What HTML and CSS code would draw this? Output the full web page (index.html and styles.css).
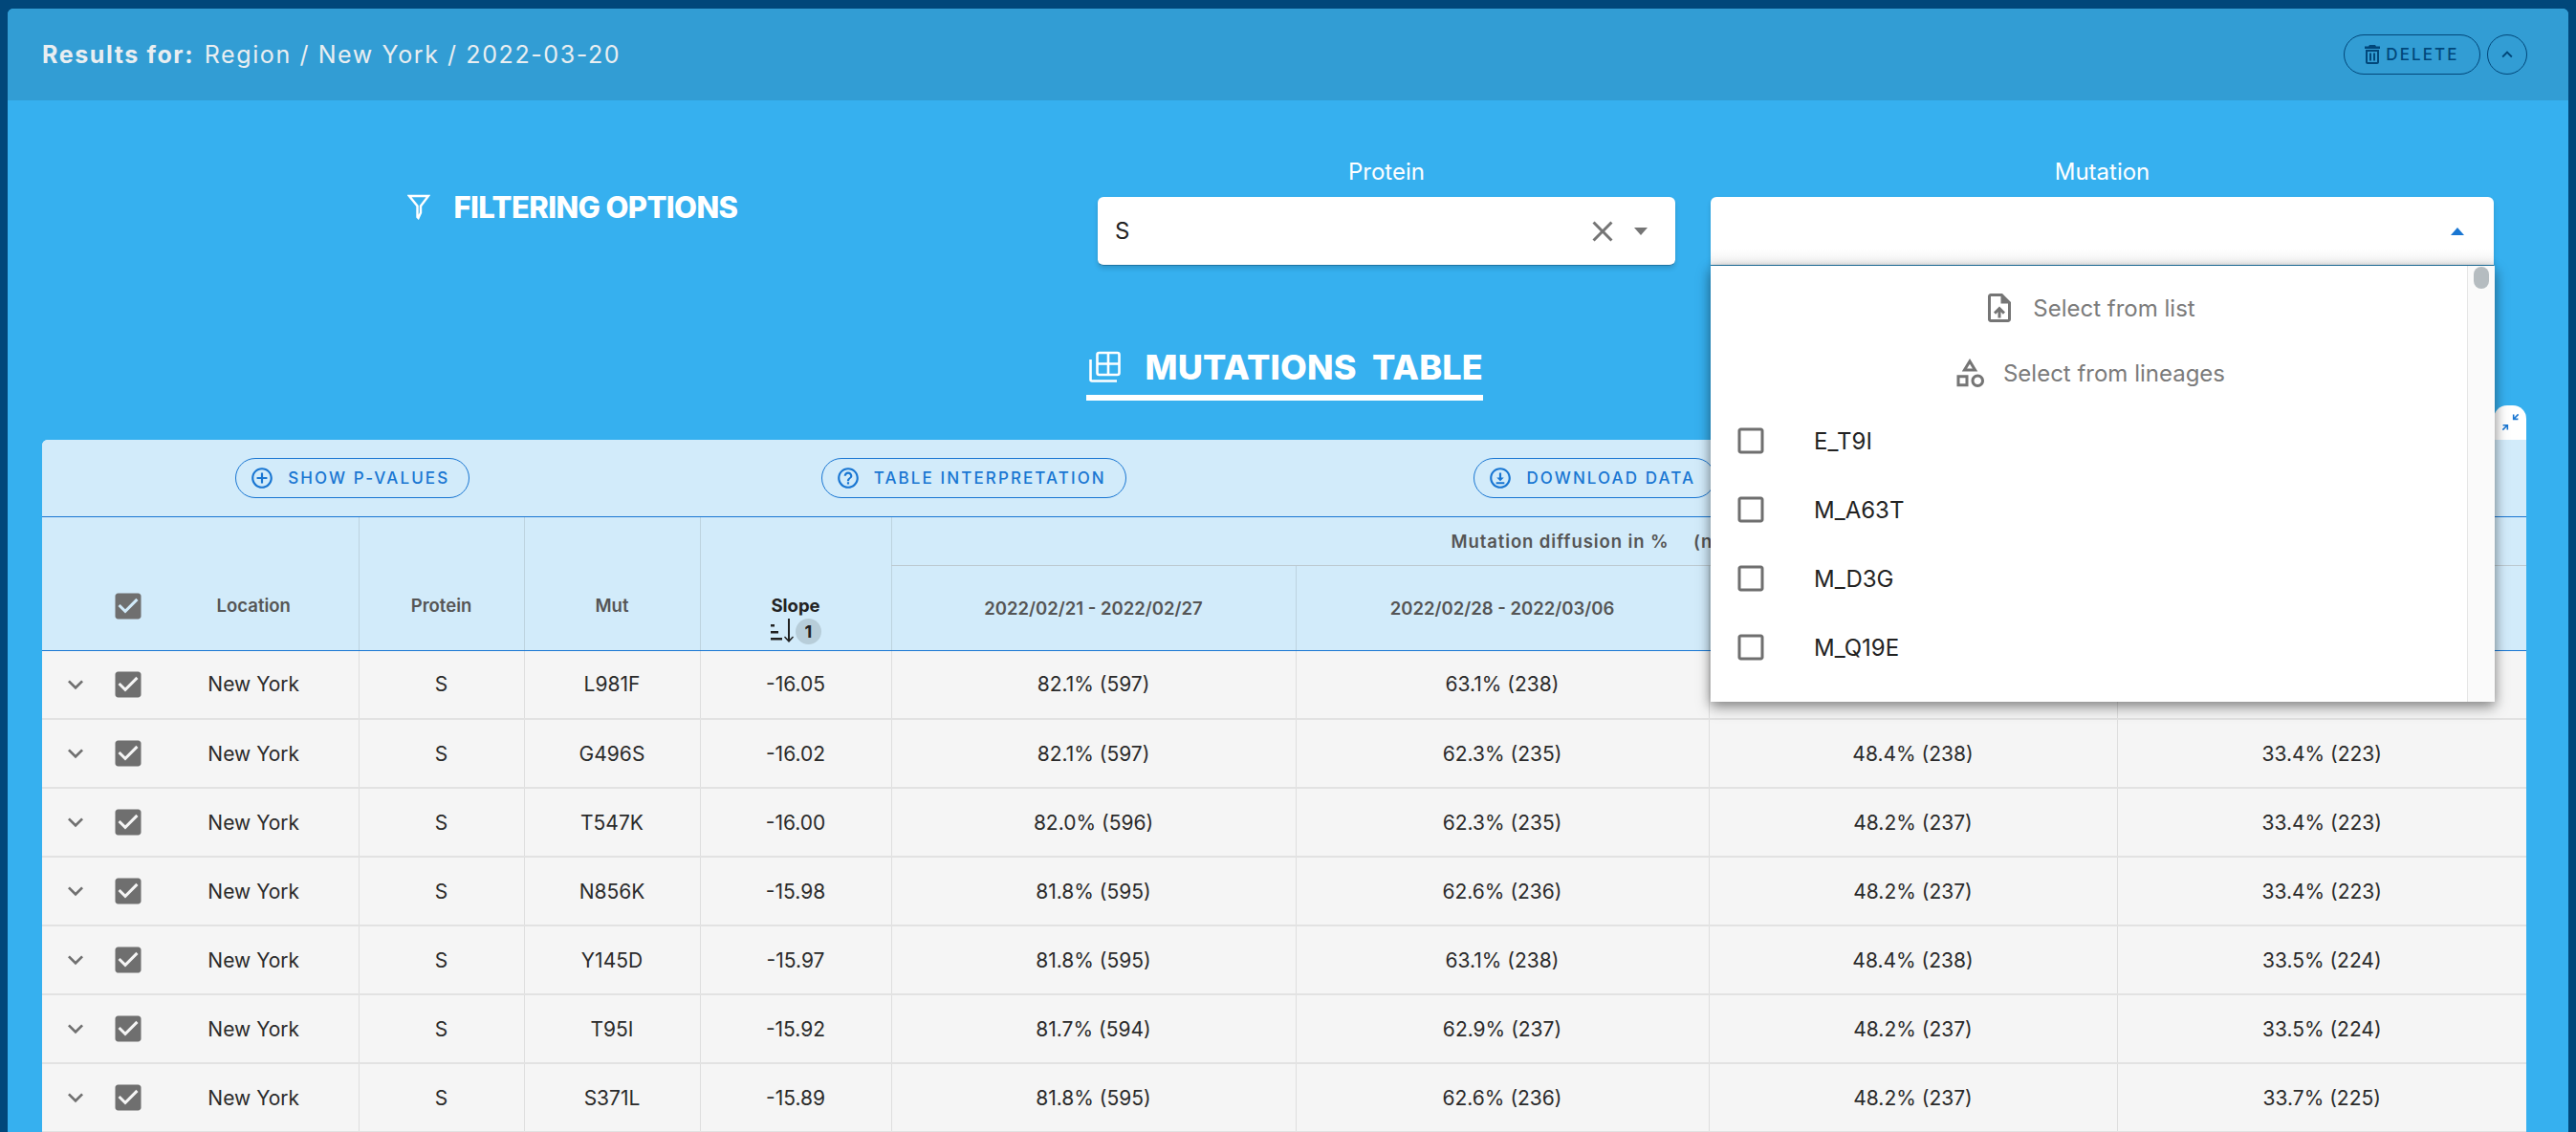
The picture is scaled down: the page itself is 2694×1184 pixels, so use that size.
FILE: index.html
```html
<!DOCTYPE html>
<html lang="en">

<head>
    <meta charset="UTF-8">
    <meta name="viewport" content="width=device-width, initial-scale=1.0">
    <title>Mutations Table</title>
    <link rel="stylesheet" href="styles.css">
</head>

<body>

    <svg class="icon-defs" xmlns="http://www.w3.org/2000/svg">
        <symbol id="i-check" viewBox="0 0 24 24"><path d="M19 3H5c-1.11 0-2 .9-2 2v14c0 1.1.89 2 2 2h14c1.1 0 2-.9 2-2V5c0-1.1-.9-2-2-2zm-9 14l-5-5 1.41-1.41L10 14.17l7.59-7.59L19 8l-9 9z"/></symbol>
        <symbol id="i-box" viewBox="0 0 24 24"><path d="M19 5v14H5V5h14m0-2H5c-1.1 0-2 .9-2 2v14c0 1.1.9 2 2 2h14c1.1 0 2-.9 2-2V5c0-1.1-.9-2-2-2z"/></symbol>
        <symbol id="i-more" viewBox="0 0 24 24"><path d="M16.59 8.59 12 13.17 7.41 8.59 6 10l6 6 6-6z"/></symbol>
    </svg>

    <div class="card">
        <header class="card-head">
            <div class="results"><b>Results for:</b> Region / New York / 2022-03-20</div>
            <div class="head-actions">
                <button type="button" class="pill pill-dark">
                    <svg class="pill-icon" viewBox="0 0 16 20"><path d="M5 0h6l1 1.5h4v2.5H0V1.500h4zM1 5h14v13c0 1.100-.9 2-2 2H3c-1.100 0-2-.9-2-2zm2 2v11h10V7zm2 1.500h2v8H5zm4 0h2v8H9z"/></svg>
                    DELETE
                </button>
                <button type="button" class="round-btn">
                    <svg viewBox="0 0 24 24"><path d="M12 8l-6 6 1.410 1.410L12 10.830l4.590 4.580L18 14z"/></svg>
                </button>
            </div>
        </header>

        <section class="filters">
            <div class="filters-title">
                <svg viewBox="0 0 24 27"><path d="M2 2h20l-8 10.500v7L11.500 25l-1-1V12.500z"/></svg>
                <span>FILTERING OPTIONS</span>
            </div>
            <div class="field field-protein">
                <div class="field-label">Protein</div>
                <div class="select">
                    <span class="select-value">S</span>
                    <svg class="select-clear" viewBox="0 0 24 24"><path d="M19 6.410 17.590 5 12 10.590 6.410 5 5 6.410 10.590 12 5 17.590 6.410 19 12 13.410 17.590 19 19 17.590 13.410 12z"/></svg>
                    <span class="caret"></span>
                </div>
            </div>
            <div class="field field-mutation">
                <div class="field-label">Mutation</div>
                <div class="select select-open">
                    <span class="select-value"></span>
                    <span class="caret caret-up"></span>
                    <div class="menu">
                        <div class="menu-list">
                            <div class="menu-action">
                                <svg viewBox="0 0 24 24"><path d="M14 2H6c-1.100 0-1.990.9-1.990 2L4 20c0 1.100.89 2 1.990 2H18c1.100 0 2-.9 2-2V8l-6-6zm4 18H6V4h7v5h5v11zM8 15.010l1.410 1.410L11 14.840V19h2v-4.160l1.590 1.590L16 15.010 12.010 11 8 15.010z"/></svg>
                                Select from list
                            </div>
                            <div class="menu-action">
                                <svg viewBox="0 0 24 24"><path d="M12 2l-5.500 9h11L12 2zm0 3.840L13.930 9h-3.870L12 5.840zM17.500 13c-2.490 0-4.500 2.010-4.500 4.500s2.010 4.500 4.500 4.500 4.500-2.010 4.500-4.500-2.010-4.500-4.500-4.500zm0 7c-1.380 0-2.500-1.120-2.500-2.500s1.120-2.500 2.500-2.500 2.500 1.120 2.500 2.500-1.120 2.500-2.500 2.500zM3 21.500h8v-8H3v8zm2-6h4v4H5v-4z"/></svg>
                                Select from lineages
                            </div>
                            <div class="menu-option"><svg class="box"><use href="#i-box"/></svg>E_T9I</div>
                            <div class="menu-option"><svg class="box"><use href="#i-box"/></svg>M_A63T</div>
                            <div class="menu-option"><svg class="box"><use href="#i-box"/></svg>M_D3G</div>
                            <div class="menu-option"><svg class="box"><use href="#i-box"/></svg>M_Q19E</div>
                        </div>
                        <div class="menu-track"><div class="menu-thumb"></div></div>
                    </div>
                </div>
            </div>
        </section>

        <div class="table-title-row">
            <h2 class="table-title">
                <svg viewBox="0 0 34 34" fill="none" stroke="#fff" stroke-width="2.600"><rect x="9.500" y="2" width="23" height="23" rx="2"/><path d="M21 2v23M9.500 13.500h23"/><path d="M2.500 9v21c0 1 .6 1.500 1.500 1.500h26"/></svg>
                <span>MUTATIONS&nbsp; TABLE</span>
            </h2>
        </div>

        <div class="table-wrap">
            <div class="expand-tab">
                <svg viewBox="0 0 24 24"><path d="M15 2v7h7V7h-3.600L23 2.400 21.600 1 17 5.600V2zM9 22v-7H2v2h3.600L1 21.600 2.400 23 7 18.400V22z"/></svg>
            </div>
            <div class="toolbar">
                <div class="toolbar-cell">
                    <button type="button" class="pill pill-blue">
                        <svg class="pill-icon" viewBox="0 0 24 24"><path d="M13 7h-2v4H7v2h4v4h2v-4h4v-2h-4V7zm-1-5C6.480 2 2 6.480 2 12s4.480 10 10 10 10-4.480 10-10S17.520 2 12 2zm0 18c-4.410 0-8-3.590-8-8s3.590-8 8-8 8 3.590 8 8-3.590 8-8 8z"/></svg>
                        SHOW P-VALUES
                    </button>
                </div>
                <div class="toolbar-cell">
                    <button type="button" class="pill pill-blue">
                        <svg class="pill-icon" viewBox="0 0 24 24"><path d="M11 18h2v-2h-2v2zm1-16C6.480 2 2 6.480 2 12s4.480 10 10 10 10-4.480 10-10S17.520 2 12 2zm0 18c-4.410 0-8-3.590-8-8s3.590-8 8-8 8 3.590 8 8-3.590 8-8 8zm0-14c-2.210 0-4 1.790-4 4h2c0-1.100.9-2 2-2s2 .9 2 2c0 2-3 1.750-3 5h2c0-2.250 3-2.500 3-5 0-2.210-1.790-4-4-4z"/></svg>
                        TABLE INTERPRETATION
                    </button>
                </div>
                <div class="toolbar-cell">
                    <button type="button" class="pill pill-blue">
                        <svg class="pill-icon" viewBox="0 0 24 24"><path d="M12 2C6.480 2 2 6.480 2 12s4.480 10 10 10 10-4.480 10-10S17.520 2 12 2zm0 18c-4.410 0-8-3.590-8-8s3.590-8 8-8 8 3.590 8 8-3.590 8-8 8zm1-13h-2v4.500H8.500L12 15l3.500-3.500H13V7zM8 16h8v1.800H8z"/></svg>
                        DOWNLOAD DATA
                    </button>
                </div>
                <div class="toolbar-cell"></div>
            </div>

            <table class="mut-table">
                <colgroup>
                    <col class="c-expand"><col class="c-check"><col class="c-loc"><col class="c-prot"><col class="c-mut"><col class="c-slope">
                    <col class="c-w1"><col class="c-w2"><col class="c-w3"><col class="c-w4">
                </colgroup>
                <thead>
                    <tr>
                        <th rowspan="2" class="th-main th-plain"></th>
                        <th rowspan="2" class="th-main th-plain th-check"><svg class="box"><use href="#i-check"/></svg></th>
                        <th rowspan="2" class="th-main th-plain">Location</th>
                        <th rowspan="2" class="th-main">Protein</th>
                        <th rowspan="2" class="th-main">Mut</th>
                        <th rowspan="2" class="th-main th-sorted">
                            Slope
                            <div class="sort-mark">
                                <svg viewBox="0 0 26 28"><path d="M1 7h4v2.500H1zM1 14h8v2.500H1zM1 21h12v2.500H1zM19 1h2v21.500l3-3 1 1-5 5.500-5-5.500 1-1 3 3z"/></svg>
                                <span class="sort-badge">1</span>
                            </div>
                        </th>
                        <th colspan="4" class="th-group">Mutation diffusion in % <span class="th-gap">(n</span></th>
                    </tr>
                    <tr class="tr-weeks">
                        <th>2022/02/21 - 2022/02/27</th>
                        <th>2022/02/28 - 2022/03/06</th>
                        <th></th>
                        <th></th>
                    </tr>
                </thead>
                <tbody>
                    <tr>
                        <td class="td-plain"><svg class="chevron"><use href="#i-more"/></svg></td>
                        <td class="td-plain td-check"><svg class="box"><use href="#i-check"/></svg></td>
                        <td class="td-plain">New York</td><td>S</td><td>L981F</td><td>-16.05</td>
                        <td>82.1% (597)</td><td>63.1% (238)</td><td></td><td></td>
                    </tr>
                    <tr>
                        <td class="td-plain"><svg class="chevron"><use href="#i-more"/></svg></td>
                        <td class="td-plain td-check"><svg class="box"><use href="#i-check"/></svg></td>
                        <td class="td-plain">New York</td><td>S</td><td>G496S</td><td>-16.02</td>
                        <td>82.1% (597)</td><td>62.3% (235)</td><td>48.4% (238)</td><td>33.4% (223)</td>
                    </tr>
                    <tr>
                        <td class="td-plain"><svg class="chevron"><use href="#i-more"/></svg></td>
                        <td class="td-plain td-check"><svg class="box"><use href="#i-check"/></svg></td>
                        <td class="td-plain">New York</td><td>S</td><td>T547K</td><td>-16.00</td>
                        <td>82.0% (596)</td><td>62.3% (235)</td><td>48.2% (237)</td><td>33.4% (223)</td>
                    </tr>
                    <tr>
                        <td class="td-plain"><svg class="chevron"><use href="#i-more"/></svg></td>
                        <td class="td-plain td-check"><svg class="box"><use href="#i-check"/></svg></td>
                        <td class="td-plain">New York</td><td>S</td><td>N856K</td><td>-15.98</td>
                        <td>81.8% (595)</td><td>62.6% (236)</td><td>48.2% (237)</td><td>33.4% (223)</td>
                    </tr>
                    <tr>
                        <td class="td-plain"><svg class="chevron"><use href="#i-more"/></svg></td>
                        <td class="td-plain td-check"><svg class="box"><use href="#i-check"/></svg></td>
                        <td class="td-plain">New York</td><td>S</td><td>Y145D</td><td>-15.97</td>
                        <td>81.8% (595)</td><td>63.1% (238)</td><td>48.4% (238)</td><td>33.5% (224)</td>
                    </tr>
                    <tr>
                        <td class="td-plain"><svg class="chevron"><use href="#i-more"/></svg></td>
                        <td class="td-plain td-check"><svg class="box"><use href="#i-check"/></svg></td>
                        <td class="td-plain">New York</td><td>S</td><td>T95I</td><td>-15.92</td>
                        <td>81.7% (594)</td><td>62.9% (237)</td><td>48.2% (237)</td><td>33.5% (224)</td>
                    </tr>
                    <tr>
                        <td class="td-plain"><svg class="chevron"><use href="#i-more"/></svg></td>
                        <td class="td-plain td-check"><svg class="box"><use href="#i-check"/></svg></td>
                        <td class="td-plain">New York</td><td>S</td><td>S371L</td><td>-15.89</td>
                        <td>81.8% (595)</td><td>62.6% (236)</td><td>48.2% (237)</td><td>33.7% (225)</td>
                    </tr>
                </tbody>
            </table>
        </div>
    </div>

</body>

</html>
```

FILE: styles.css
```css
html,
body {
    height: 100%;
}

body {
    font-family: 'Inter', 'Liberation Sans', sans-serif;
    background-color: #01477a;
    margin: 0;
    padding: 9px 8px 0;
    box-sizing: border-box;
    overflow: hidden;
}

button {
    font-family: inherit;
    cursor: pointer;
}

.icon-defs {
    display: none;
}

.card {
    background-color: #36b0ef;
    border-radius: 6px 6px 0 0;
    height: 1400px;
}

.card-head {
    height: 96px;
    box-sizing: border-box;
    background-color: #329dd4;
    border-radius: 6px 6px 0 0;
    padding: 0 43px 0 36px;
    display: flex;
    justify-content: space-between;
    align-items: center;
}

.results {
    color: #e9eef1;
    font-size: 25px;
    letter-spacing: 1.6px;
}

.results b {
    font-weight: 700;
    margin-right: 2px;
}

.head-actions {
    display: flex;
    gap: 7px;
    margin-top: -1px;
}

.pill {
    display: inline-flex;
    align-items: center;
    justify-content: center;
    height: 42px;
    box-sizing: border-box;
    background: transparent;
    border-radius: 21px;
    font-size: 17px;
    font-weight: 500;
    letter-spacing: 2.1px;
    padding: 0;
}

.pill-dark {
    width: 143px;
    border: 1px solid #01477a;
    color: #01477a;
    gap: 6px;
}

.pill-dark .pill-icon {
    width: 16px;
    height: 20px;
    fill: #01477a;
}

.round-btn {
    width: 42px;
    height: 42px;
    box-sizing: border-box;
    padding: 9px;
    background: transparent;
    border: 1px solid #01477a;
    border-radius: 50%;
}

.round-btn svg {
    display: block;
    width: 22px;
    height: 22px;
    fill: #01477a;
}

.filters {
    display: flex;
    align-items: flex-start;
    padding: 63px 78px 0 36px;
    gap: 37px;
}

.filters-title {
    width: 1067px;
    box-sizing: border-box;
    padding-left: 42px;
    margin-top: 30px;
    display: flex;
    align-items: center;
    justify-content: center;
    gap: 25px;
    color: #fff;
    font-size: 31px;
    font-weight: 800;
    letter-spacing: -0.6px;
}

.filters-title svg {
    width: 24px;
    height: 27px;
    fill: none;
    stroke: #fff;
    stroke-width: 2.4px;
}

.field-protein {
    width: 604px;
}

.field-mutation {
    width: 819px;
}

.field-label {
    color: #fff;
    text-align: center;
    font-size: 24px;
    line-height: 24px;
    margin-bottom: 14px;
}

.select {
    position: relative;
    height: 72px;
    box-sizing: border-box;
    background-color: #fff;
    border-radius: 6px;
    border-bottom: 1px solid #1b75a5;
    box-shadow: 0 3px 5px rgba(0, 0, 0, 0.14);
    display: flex;
    align-items: center;
    padding: 0 17px 0 18px;
    font-size: 24px;
    color: #222;
}

.select-open {
    background: linear-gradient(#fff 76%, #f3f3f3);
    border-radius: 6px 6px 0 0;
}

.select-value {
    flex: 1;
}

.select-clear {
    width: 36px;
    height: 36px;
    fill: #757575;
    margin-right: 15px;
}

.caret {
    width: 0;
    height: 0;
    margin-right: 12px;
    border-left: 7.5px solid transparent;
    border-right: 7.5px solid transparent;
    border-top: 8px solid #757575;
}

.caret-up {
    margin-right: 14px;
    border-top: 0;
    border-bottom: 8px solid #1976d2;
}

.menu {
    position: absolute;
    z-index: 5;
    top: 72px;
    left: 0;
    right: -1px;
    height: 456px;
    background-color: #fff;
    display: flex;
    box-shadow: 0 6px 14px rgba(0, 0, 0, 0.35), 0 2px 10px rgba(0, 0, 0, 0.2);
}

.menu-list {
    flex: 1;
    padding-top: 10px;
}

.menu-action {
    display: flex;
    align-items: center;
    justify-content: center;
    gap: 17px;
    height: 68px;
    color: #7b7b7b;
    font-size: 24px;
}

.menu-action svg {
    width: 36px;
    height: 36px;
    fill: #757575;
}

.menu-action + .menu-action {
    margin-bottom: 1px;
}

.menu-option {
    display: flex;
    align-items: center;
    height: 72px;
    padding-left: 24px;
    gap: 48px;
    color: #222;
    font-size: 24px;
}

.menu-track {
    width: 29px;
    background-color: #fafafa;
    border-left: 1px solid #e5e5e5;
    box-sizing: border-box;
    padding: 1px 6px 0 6px;
}

.menu-thumb {
    height: 23px;
    background-color: #b5bcc0;
    border-radius: 8px;
}

.box {
    width: 36px;
    height: 36px;
    fill: #6f6f6f;
    display: block;
}

.table-title-row {
    display: flex;
    justify-content: center;
    margin: 0 8px 0 0;
    padding-top: 85px;
}

.table-title {
    margin: 0;
    width: 415px;
    display: flex;
    align-items: center;
    gap: 26px;
    box-sizing: border-box;
    padding: 0 0 8px 2px;
    border-bottom: 6px solid #fff;
    color: #fff;
    font-size: 36px;
    font-weight: 800;
    letter-spacing: 0.2px;
    line-height: 42px;
    white-space: nowrap;
}

.table-title svg {
    width: 34px;
    height: 34px;
    flex: none;
}

.table-wrap {
    position: relative;
    margin: 41px 44px 0 36px;
    background-color: #f5f5f5;
    border-radius: 6px 0 0 0;
}

.expand-tab {
    position: absolute;
    top: -36px;
    right: 0;
    width: 34px;
    height: 36px;
    background-color: #fff;
    border-radius: 14px 14px 0 0;
    display: flex;
    justify-content: center;
    padding-top: 8px;
    box-sizing: border-box;
}

.expand-tab svg {
    width: 19px;
    height: 19px;
    fill: #1976d2;
}

.toolbar {
    height: 81px;
    box-sizing: border-box;
    background-color: #d2ebfa;
    border-radius: 6px 0 0 0;
    border-bottom: 1px solid #1976d2;
    display: grid;
    grid-template-columns: repeat(4, 1fr);
    align-items: center;
    justify-items: center;
}

.pill-blue {
    border: 1px solid #1976d2;
    color: #1976d2;
    gap: 14px;
    padding: 0 20px 0 14px;
}

.pill-blue .pill-icon {
    width: 26px;
    height: 26px;
    fill: #1976d2;
}

.mut-table {
    width: 2598px;
    table-layout: fixed;
    border-collapse: collapse;
    font-size: 21px;
    color: #2a2a2a;
}

.c-expand { width: 68px; }
.c-check { width: 44px; }
.c-loc { width: 219px; }
.c-prot { width: 173px; }
.c-mut { width: 184px; }
.c-slope { width: 200px; }
.c-w1 { width: 423px; }
.c-w2 { width: 432px; }
.c-w3 { width: 427px; }
.c-w4 { width: 428px; }

.mut-table th {
    background-color: #d2ebfa;
    color: #555;
    font-size: 18.5px;
    font-weight: 600;
    padding: 0;
    border-left: 1px solid #bdd3df;
    border-bottom: 1px solid #1976d2;
}

.mut-table .th-main {
    height: 139px;
    vertical-align: top;
    padding-top: 80px;
    line-height: 24px;
    box-sizing: border-box;
}

.mut-table .th-plain {
    border-left: 0;
}

.mut-table .th-check {
    padding-top: 75px;
}

.th-check .box {
    margin-left: 4px;
}

.mut-table .th-sorted {
    color: #222;
    font-weight: 700;
}

.sort-mark {
    display: flex;
    justify-content: center;
    align-items: center;
    gap: 1px;
    margin-top: 1px;
}

.sort-mark svg {
    width: 26px;
    height: 28px;
    fill: #222;
}

.sort-badge {
    width: 27px;
    height: 27px;
    line-height: 27px;
    border-radius: 50%;
    background-color: #b7cdd9;
    color: #222;
    font-size: 18px;
}

.mut-table .th-group {
    height: 50px;
    box-sizing: border-box;
    text-align: left;
    padding-left: 585px;
    letter-spacing: 0.9px;
    border-bottom: 1px solid #bdc9d0;
}

.th-gap {
    margin-left: 20px;
}

.tr-weeks th {
    height: 89px;
    box-sizing: border-box;
}

.mut-table td {
    height: 72px;
    box-sizing: border-box;
    padding: 0;
    text-align: center;
    border-left: 1px solid #dedede;
    border-bottom: 2px solid #e2e2e2;
}

.mut-table .td-plain {
    border-left: 0;
}

.td-check .box {
    margin-left: 4px;
}

.chevron {
    display: block;
    width: 32px;
    height: 32px;
    margin: 0 0 0 19px;
    fill: #6f6f6f;
}
```
